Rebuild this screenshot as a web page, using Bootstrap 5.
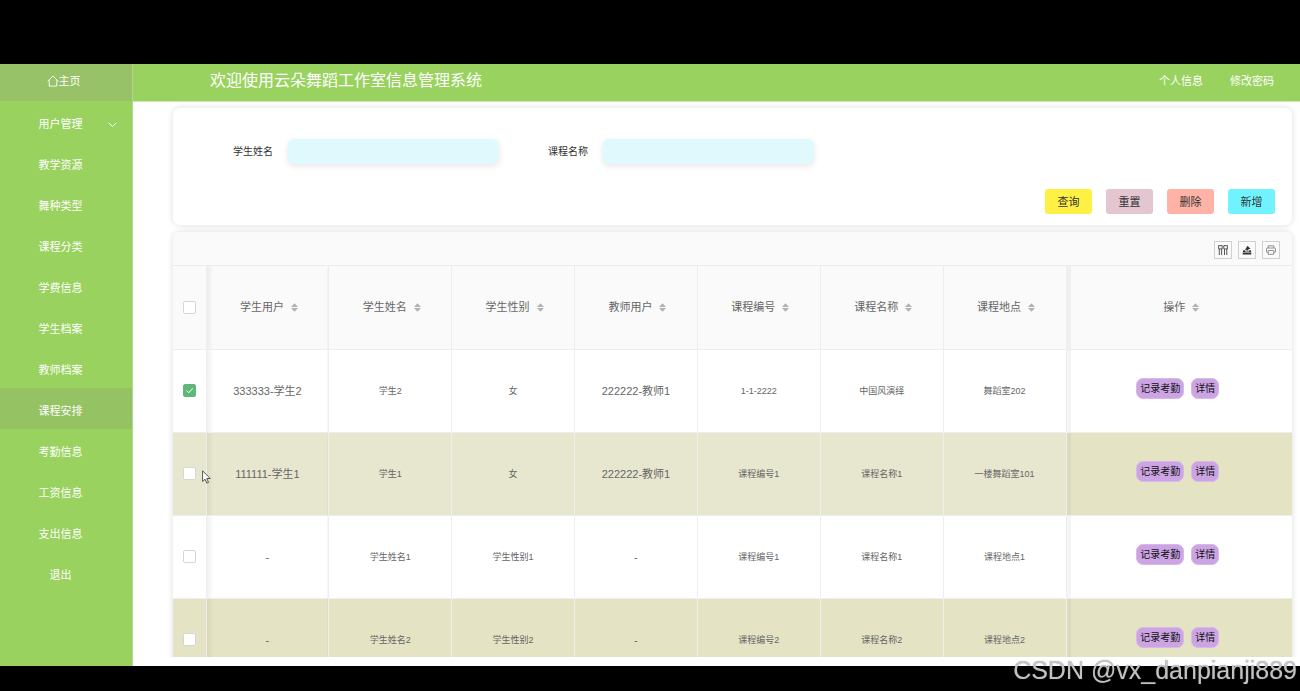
<!DOCTYPE html>
<html lang="zh-CN">
<head>
<meta charset="utf-8">
<meta name="viewport" content="width=device-width, initial-scale=1">
<title>云朵舞蹈工作室信息管理系统</title>
<link href="https://cdn.jsdelivr.net/npm/bootstrap@5.3.0/dist/css/bootstrap.min.css" rel="stylesheet">
<style>
  body { background: #000; font-family: "Liberation Sans", "Noto Sans CJK SC", sans-serif; font-size: 11px; line-height: 16px; color: #666; padding: 64px 0 25px; }
  .app { height: calc(100vh - 89px); background: #fff; }

  .sidebar { width: 133px; background: #99d25e; border-right: 1px solid #b3d592; }
  .sidebar a { color: #fff; text-decoration: none; }
  .side-home { height: 37px; padding: 0 5px 3px 0; background: #97c267; }
  .side-item { height: 41px; padding: 5px 11px 0 0; position: relative; }
  .side-item.active { background: #95c263; }
  .side-arrow { position: absolute; right: 15px; top: 21px; }

  .topbar { height: 38px; background: #99d25e; padding: 0 26px 3px 77px; border-bottom: 1px solid #cde8b0; }
  .topbar h1 { font-size: 16px; line-height: 24px; font-weight: 400; color: #fff; }
  .topbar a { color: #fff; text-decoration: none; }
  .top-links { gap: 27px; }

  .main-area { padding-bottom: 9px; }
  .view { padding: 6px 8px 0 40px; gap: 7px; }
  .panel { background: #fff; border-radius: 7px; box-shadow: 0 0 6px rgba(0, 0, 0, .14); flex: none; }

  .search { padding: 31px 17px 11px 60px; }
  .search-fields { gap: 49px; }
  .field label { width: 55px; font-size: 10px; color: #333; }
  .field .form-control { width: 211px; height: 25px; min-height: 0; background: #e0f9fd; border: 0; border-radius: 6px; font-size: 11px; padding: 2px 8px; box-shadow: 0 2px 6px rgba(0, 0, 0, .1); }
  .search-actions { gap: 14px; margin-top: 25px; }
  .search-actions .btn { width: 47px; height: 25px; padding: 1px 0 0; border: 0; border-radius: 3px; font-size: 11px; color: #333; }
  .btn-query { background: #fff143; }
  .btn-reset { background: #e4c6d0; }
  .btn-remove { background: #ffb3a7; }
  .btn-add { background: #70f3ff; }

  .tools { height: 34px; padding: 3px 12px 0 0; gap: 6px; background: #fafafa; border-bottom: 1px solid #ececec; }
  .tool-btn { width: 18px; height: 18px; border: 1px solid #d0d0d0; background: transparent; }

  .data-table { table-layout: fixed; width: 100%; }
  .data-table th, .data-table td { height: 83px; padding: 0; text-align: center; vertical-align: middle; font-weight: 400; border-right: 1px solid #eee; border-bottom: 1px solid #eee; }
  .data-table th + th { padding-left: 3px; }
  .data-table td { font-size: 9px; }
  .data-table td.user { font-size: 11px; }
  .data-table thead { background: #fafafa; }
  .data-table tbody tr:nth-child(even) { background: #e4e3c4; }
  .data-table tbody tr.hovered { background: #e7e7cf; }
  .data-table tr > :nth-child(2) { background-image: linear-gradient(to right, rgba(0, 0, 0, .06), transparent 7px); }
  .data-table tr > :last-child { border-right: 0; padding-left: 4px; box-shadow: inset 4px 0 0 rgba(0, 0, 0, .04); }
  .data-table tr.hovered > :last-child { background: #e4e3c4; }
  .col-tick { width: 33px; }
  .col-ops { width: 226px; }
  .sort { margin-left: 7px; vertical-align: -1px; }
  .data-table .form-check-input { width: 13px; height: 13px; min-height: 0; margin: 0 0 1px; border: 1px solid #d6d6d6; border-radius: 2px; vertical-align: middle; background-size: 11px; }
  .data-table .form-check-input:checked { background-color: #5fb878; border-color: #5fb878; background-image: url("data:image/svg+xml,%3csvg xmlns='http://www.w3.org/2000/svg' viewBox='0 0 11 11'%3e%3cpath d='M2.500 5.500l2.300 2.200 4-4.400' fill='none' stroke='%23fff'/%3e%3c/svg%3e"); }

  .ops { margin-bottom: 5px; }
  .ops .btn { height: 21px; padding: 1px 3px 0; margin-right: 7px; border: 1px solid #d6b9e9; border-radius: 7px; background: #cca4e3; font-size: 10px; line-height: 16px; color: #111; }

  .pointer { position: absolute; left: 29px; top: 37px; z-index: 2; }
  .watermark { position: fixed; right: 3px; bottom: 7px; font-size: 25px; line-height: 28px; color: rgba(215, 215, 215, .8); text-shadow: 0 0 1px #777; }
</style>
</head>
<body>
<div class="app d-flex overflow-hidden">
  <nav class="sidebar flex-shrink-0">
    <a href="#" class="side-home d-flex align-items-center justify-content-center">
      <svg width="12" height="12" viewBox="0 0 12 12" fill="none" stroke="#fff" stroke-width=".9"><path d="M.6 6.4 6 1l5.400 5.400M2.200 5.200v5.900h7.600V5.200"/></svg>主页</a>
    <a href="#" class="side-item d-flex align-items-center justify-content-center">用户管理<svg class="side-arrow" width="9" height="6" viewBox="0 0 9 6" fill="none" stroke="#fff"><path d="M.7.8 4.500 4.600 8.300.8"/></svg></a>
    <a href="#" class="side-item d-flex align-items-center justify-content-center">教学资源</a>
    <a href="#" class="side-item d-flex align-items-center justify-content-center">舞种类型</a>
    <a href="#" class="side-item d-flex align-items-center justify-content-center">课程分类</a>
    <a href="#" class="side-item d-flex align-items-center justify-content-center">学费信息</a>
    <a href="#" class="side-item d-flex align-items-center justify-content-center">学生档案</a>
    <a href="#" class="side-item d-flex align-items-center justify-content-center">教师档案</a>
    <a href="#" class="side-item active d-flex align-items-center justify-content-center">课程安排</a>
    <a href="#" class="side-item d-flex align-items-center justify-content-center">考勤信息</a>
    <a href="#" class="side-item d-flex align-items-center justify-content-center">工资信息</a>
    <a href="#" class="side-item d-flex align-items-center justify-content-center">支出信息</a>
    <a href="#" class="side-item d-flex align-items-center justify-content-center">退出</a>
  </nav>

  <div class="main-area d-flex flex-column flex-grow-1 overflow-hidden">
    <header class="topbar d-flex align-items-center justify-content-between flex-shrink-0">
      <h1 class="m-0">欢迎使用云朵舞蹈工作室信息管理系统</h1>
      <div class="top-links d-flex"><a href="#">个人信息</a><a href="#">修改密码</a></div>
    </header>

    <main class="view d-flex flex-column flex-grow-1 overflow-hidden">
      <form class="panel search">
        <div class="search-fields d-flex">
          <div class="field d-flex align-items-center"><label for="stu">学生姓名</label><input id="stu" type="text" class="form-control"></div>
          <div class="field d-flex align-items-center"><label for="course">课程名称</label><input id="course" type="text" class="form-control"></div>
        </div>
        <div class="search-actions d-flex justify-content-end">
          <button type="button" class="btn btn-query">查询</button>
          <button type="button" class="btn btn-reset">重置</button>
          <button type="button" class="btn btn-remove">删除</button>
          <button type="button" class="btn btn-add">新增</button>
        </div>
      </form>

      <section class="panel overflow-visible">
        <div class="tools d-flex align-items-center justify-content-end rounded-top">
          <button type="button" class="tool-btn p-0 d-flex align-items-center justify-content-center" aria-label="筛选列">
            <svg width="10" height="10" viewBox="0 0 10 10" fill="none" stroke="#444" stroke-width=".9"><path d="M.6.6h3.600v3.300H.6zM5.800.6h3.600v3.300H5.800zM1.300 4v6M3.600 4v6M6.500 4v6M8.800 4v6"/></svg></button>
          <button type="button" class="tool-btn p-0 d-flex align-items-center justify-content-center" aria-label="导出">
            <svg width="10" height="10" viewBox="0 0 10 10" fill="#333"><path d="M5.500.8 8.600 3.900H6.500v1.700H4.300V4.500L2.800 5.200zM1.200 5.300h2v1.200h3.900V5.300h1.700L9.200 7H.8zM.7 7.500h8.600v1.900H.7z"/></svg></button>
          <button type="button" class="tool-btn p-0 d-flex align-items-center justify-content-center" aria-label="打印">
            <svg width="10" height="10" viewBox="0 0 10 10" fill="none" stroke="#777" stroke-width=".8"><path d="M2.200 3V.8h5.600V3M2.200 7.400H1.400Q.5 7.400.5 6.500V4Q.5 3 1.500 3h7Q9.500 3 9.500 4v2.500q0 .9-.9.900H7.800M2.200 5.500h5.600v3.800H2.200z"/></svg></button>
        </div>
        <table class="data-table">
          <colgroup><col class="col-tick"><col><col><col><col><col><col><col><col class="col-ops"></colgroup>
          <thead>
            <tr>
              <th><input type="checkbox" class="form-check-input" aria-label="全选"></th>
              <th>学生用户<svg class="sort" width="7" height="9" viewBox="0 0 7 9" fill="#b2b2b2"><path d="M0 4 3.500.2 7 4zM0 5h7L3.500 8.800z"/></svg></th>
              <th>学生姓名<svg class="sort" width="7" height="9" viewBox="0 0 7 9" fill="#b2b2b2"><path d="M0 4 3.500.2 7 4zM0 5h7L3.500 8.800z"/></svg></th>
              <th>学生性别<svg class="sort" width="7" height="9" viewBox="0 0 7 9" fill="#b2b2b2"><path d="M0 4 3.500.2 7 4zM0 5h7L3.500 8.800z"/></svg></th>
              <th>教师用户<svg class="sort" width="7" height="9" viewBox="0 0 7 9" fill="#b2b2b2"><path d="M0 4 3.500.2 7 4zM0 5h7L3.500 8.800z"/></svg></th>
              <th>课程编号<svg class="sort" width="7" height="9" viewBox="0 0 7 9" fill="#b2b2b2"><path d="M0 4 3.500.2 7 4zM0 5h7L3.500 8.800z"/></svg></th>
              <th>课程名称<svg class="sort" width="7" height="9" viewBox="0 0 7 9" fill="#b2b2b2"><path d="M0 4 3.500.2 7 4zM0 5h7L3.500 8.800z"/></svg></th>
              <th>课程地点<svg class="sort" width="7" height="9" viewBox="0 0 7 9" fill="#b2b2b2"><path d="M0 4 3.500.2 7 4zM0 5h7L3.500 8.800z"/></svg></th>
              <th>操作<svg class="sort" width="7" height="9" viewBox="0 0 7 9" fill="#b2b2b2"><path d="M0 4 3.500.2 7 4zM0 5h7L3.500 8.800z"/></svg></th>
            </tr>
          </thead>
          <tbody>
            <tr>
              <td><input type="checkbox" class="form-check-input" aria-label="选择 333333" checked></td>
              <td class="user">333333-学生2</td><td>学生2</td><td>女</td><td class="user">222222-教师1</td><td>1-1-2222</td><td>中国风演绎</td><td>舞蹈室202</td>
              <td><div class="ops d-flex justify-content-center"><button type="button" class="btn">记录考勤</button><button type="button" class="btn">详情</button></div></td>
            </tr>
            <tr class="hovered">
              <td class="position-relative"><input type="checkbox" class="form-check-input" aria-label="选择 111111">
                <svg class="pointer" width="9" height="14" viewBox="0 0 9 14"><path d="M.6.8v10.700l2.500-2.300 1.700 3.900 1.700-.7-1.700-3.900h3.400z" fill="#fff" stroke="#444" stroke-width=".9"/></svg></td>
              <td class="user">111111-学生1</td><td>学生1</td><td>女</td><td class="user">222222-教师1</td><td>课程编号1</td><td>课程名称1</td><td>一楼舞蹈室101</td>
              <td><div class="ops d-flex justify-content-center"><button type="button" class="btn">记录考勤</button><button type="button" class="btn">详情</button></div></td>
            </tr>
            <tr>
              <td><input type="checkbox" class="form-check-input" aria-label="选择 课程编号1"></td>
              <td class="user">-</td><td>学生姓名1</td><td>学生性别1</td><td class="user">-</td><td>课程编号1</td><td>课程名称1</td><td>课程地点1</td>
              <td><div class="ops d-flex justify-content-center"><button type="button" class="btn">记录考勤</button><button type="button" class="btn">详情</button></div></td>
            </tr>
            <tr>
              <td><input type="checkbox" class="form-check-input" aria-label="选择 课程编号2"></td>
              <td class="user">-</td><td>学生姓名2</td><td>学生性别2</td><td class="user">-</td><td>课程编号2</td><td>课程名称2</td><td>课程地点2</td>
              <td><div class="ops d-flex justify-content-center"><button type="button" class="btn">记录考勤</button><button type="button" class="btn">详情</button></div></td>
            </tr>
          </tbody>
        </table>
      </section>
    </main>
  </div>
</div>
<div class="watermark">CSDN @vx_danpianji889</div>
<script src="https://cdn.jsdelivr.net/npm/bootstrap@5.3.0/dist/js/bootstrap.bundle.min.js"></script>
</body>
</html>
